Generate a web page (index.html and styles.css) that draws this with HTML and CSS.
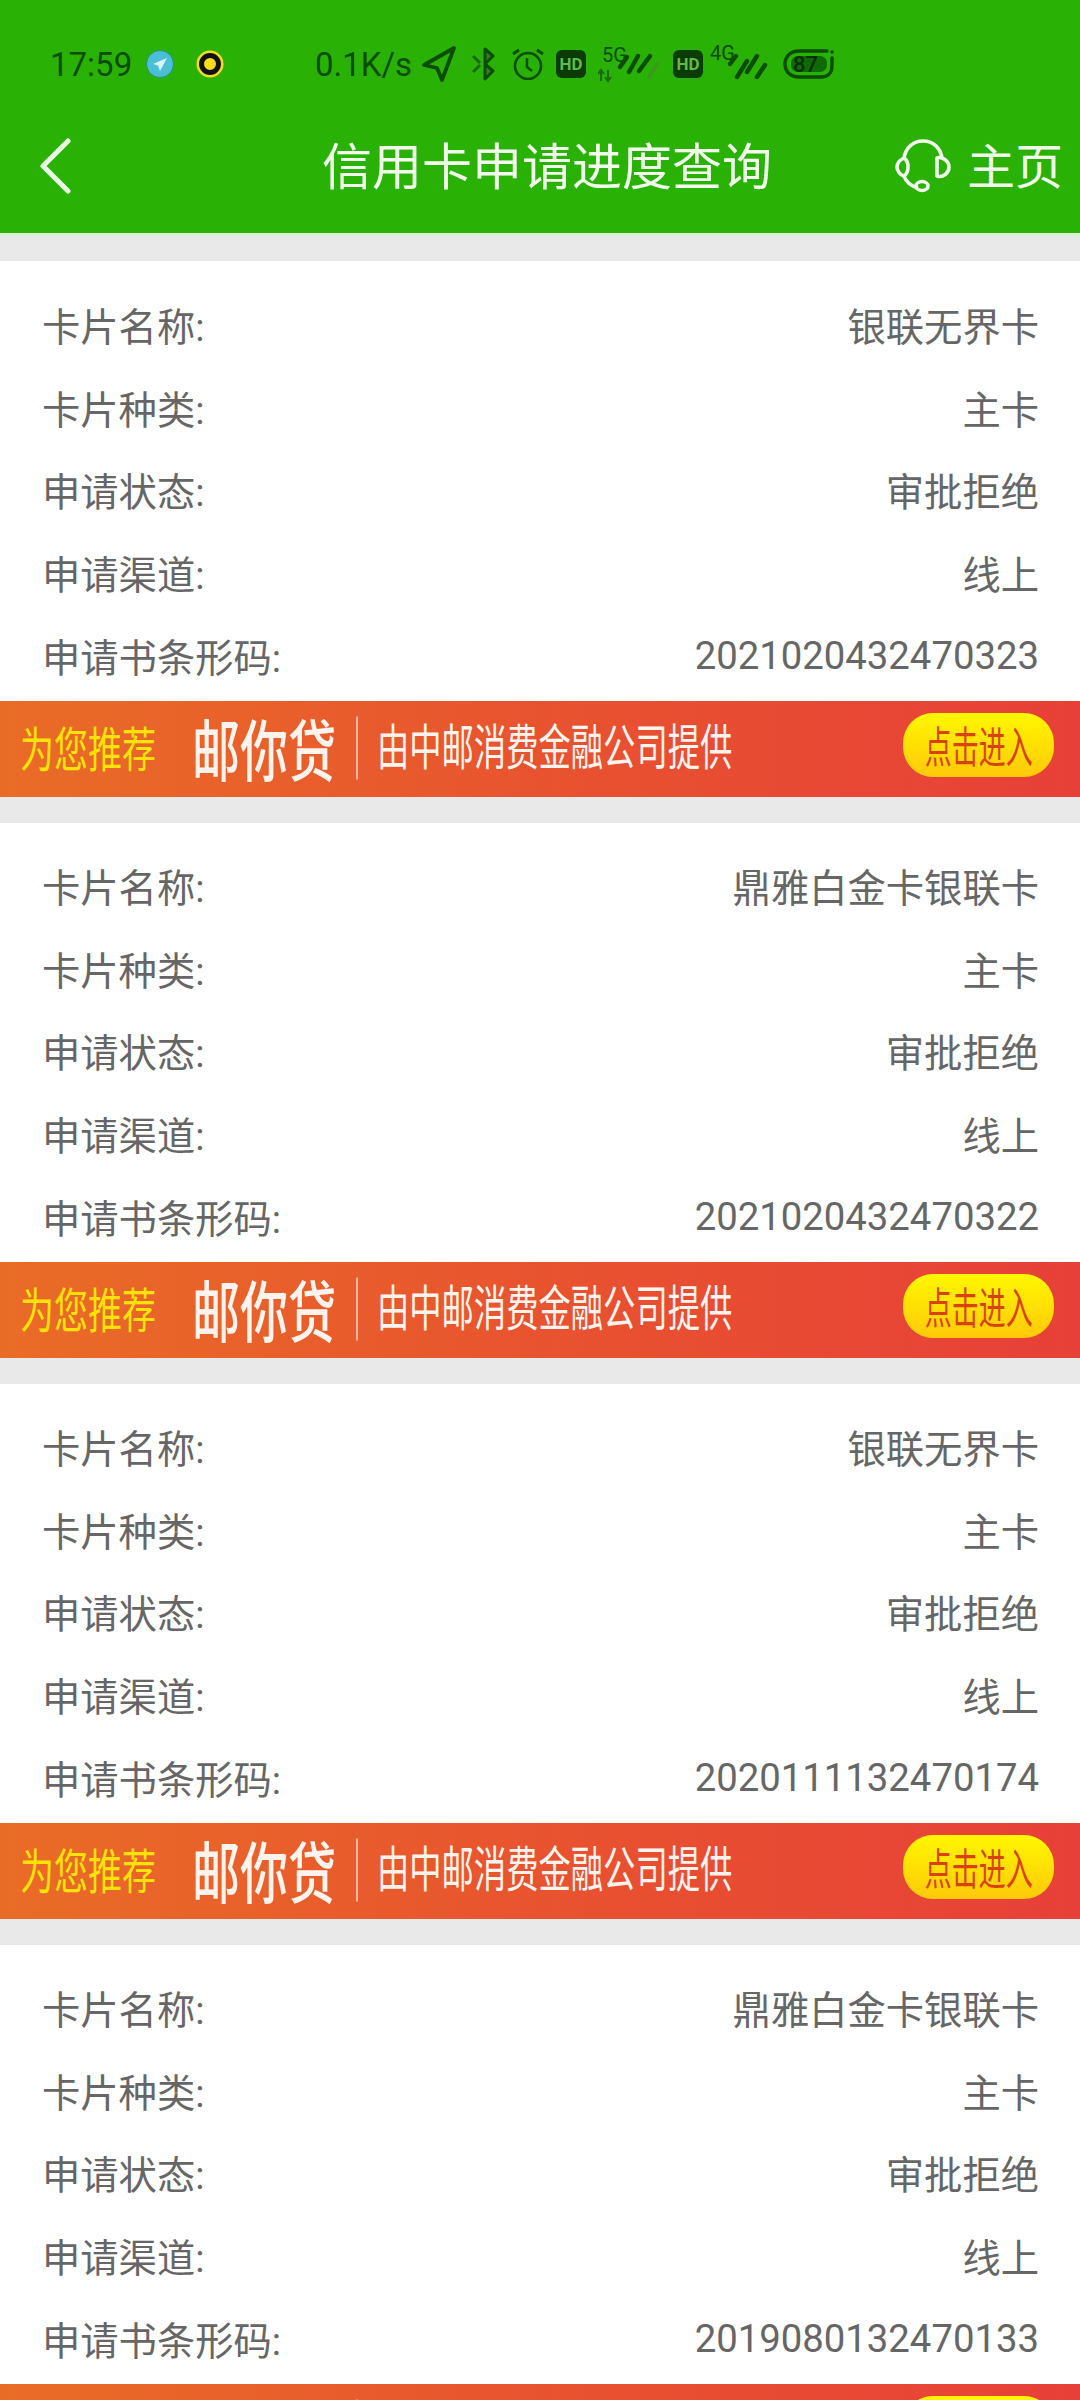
FILE: index.html
```html
<!DOCTYPE html>
<html lang="zh-CN">
<head>
  <meta charset="UTF-8">
  <meta name="viewport" content="width=device-width, initial-scale=1.0">
  <title>信用卡申请进度查询</title>
  <link rel="stylesheet" href="styles.css">
</head>
<body>
  <header class="top">
    <div class="status">
      <span class="time">17:59</span>
      <svg class="ic-tg" viewBox="0 0 28 28"><circle cx="14" cy="14" r="13.5" fill="#4cbfd6" stroke="#1d8a7a" stroke-width=".8"/><path d="M21 8 7 14l5 1.6L14 21z" fill="#d8f4f8"/></svg>
      <svg class="ic-dot" viewBox="0 0 28 28"><circle cx="14" cy="14" r="13.5" fill="#f7dc1e"/><circle cx="14" cy="14" r="8.5" fill="#f7dc1e" stroke="#111" stroke-width="5"/></svg>
      <span class="speed">0.1K/s</span>
      <svg class="ic-nav" viewBox="0 0 34 36"><path d="M32 2 2 19l13 3 5 12z" fill="none" stroke="#0b4d03" stroke-width="3.8" stroke-linejoin="round"/></svg>
      <svg class="ic-bt" viewBox="0 0 24 34"><path d="M13 2v30l8-8-8-7 8-8z" fill="#3a7a2c" stroke="#0b4d03" stroke-width="3" stroke-linejoin="round"/><path d="m1 9 7 7M1 25l7-7" stroke="#1c6a10" stroke-width="3" fill="none"/></svg>
      <svg class="ic-alarm" viewBox="0 0 32 32"><circle cx="16" cy="18" r="13" fill="none" stroke="#0b4d03" stroke-width="2.6"/><path d="M15 10v9l5 4" fill="none" stroke="#0b4d03" stroke-width="2.6"/><path d="m1 6 6-4M31 6l-6-4" stroke="#0b4d03" stroke-width="3"/></svg>
      <span class="hd">HD</span>
      <svg class="ic-sig-a" viewBox="0 0 62 40"><text x="4" y="18" class="sig-text">5G</text><path d="M3 37V27m-3 3 3-4 3 4M10 26v10m-3-3 3 4 3-4" stroke="#1c6a10" stroke-width="2" fill="none"/><path d="m22 23 7-10M31 28l9-16M41 27l11-15" stroke="#0b4d03" stroke-width="4.4" stroke-linecap="round"/><path d="m51 33 8-13" stroke="#3a9a1c" stroke-width="3.4" stroke-linecap="round"/></svg>
      <span class="hd hd-two">HD</span>
      <svg class="ic-sig-b" viewBox="0 0 62 40"><text x="2" y="16" class="sig-text">4G</text><path d="m22 20 6-8M29 33l10-16M39 28l10-16M49 33l8-12" stroke="#0b4d03" stroke-width="4.4" stroke-linecap="round"/></svg>
      <svg class="ic-bat" viewBox="0 0 52 30"><path d="M44 2H16C8 2 2 7 2 15s6 13 14 13h22c7 0 11-4 11-11V9" fill="none" stroke="#0b4d03" stroke-width="3.4" stroke-linecap="round"/><circle cx="49" cy="3" r="1.8" fill="#0b4d03"/><rect x="8" y="7" width="36" height="16" rx="7" fill="#0f6a05"/><text x="10" y="22.5" class="bat-text">87</text></svg>
    </div>
    <nav class="nav">
      <svg class="ic-back" viewBox="0 0 32 56"><path d="M29 3 4 28l25 25" fill="none" stroke="#eafbe4" stroke-width="5" stroke-linecap="round" stroke-linejoin="round"/></svg>
      <h1 class="title">信用卡申请进度查询</h1>
      <div class="home">
        <svg class="ic-headset" viewBox="0 0 56 54"><path d="M9 20C10 9 18 2 28 2s18 7 19 18" fill="none" stroke="#f1fcec" stroke-width="3.6"/><path d="M9 19c-4 2-7 5-7 9s3 8 7 9c3-2 4-5 4-9s-1-7-4-9zM42 19c5-2 12 3 12 9s-6 11-12 9z" fill="none" stroke="#f1fcec" stroke-width="3.6" stroke-linejoin="round"/><path d="M9 37c2 6 7 10 14 12" fill="none" stroke="#f1fcec" stroke-width="3.6"/><ellipse cx="27" cy="47" rx="6" ry="4.5" fill="none" stroke="#f1fcec" stroke-width="3.6"/></svg>
        <span class="home-text">主页</span>
      </div>
    </nav>
  </header>

  <main class="list">
    <section class="card">
      <div class="row"><span>卡片名称:</span><span>银联无界卡</span></div>
      <div class="row"><span>卡片种类:</span><span>主卡</span></div>
      <div class="row"><span>申请状态:</span><span>审批拒绝</span></div>
      <div class="row"><span>申请渠道:</span><span>线上</span></div>
      <div class="row"><span>申请书条形码:</span><span>2021020432470323</span></div>
    </section>
    <div class="banner">
      <span class="b-tag">为您推荐</span>
      <span class="b-name">邮你贷</span>
      <span class="b-sub">由中邮消费金融公司提供</span>
      <span class="b-btn"><span>点击进入</span></span>
    </div>

    <section class="card">
      <div class="row"><span>卡片名称:</span><span>鼎雅白金卡银联卡</span></div>
      <div class="row"><span>卡片种类:</span><span>主卡</span></div>
      <div class="row"><span>申请状态:</span><span>审批拒绝</span></div>
      <div class="row"><span>申请渠道:</span><span>线上</span></div>
      <div class="row"><span>申请书条形码:</span><span>2021020432470322</span></div>
    </section>
    <div class="banner">
      <span class="b-tag">为您推荐</span>
      <span class="b-name">邮你贷</span>
      <span class="b-sub">由中邮消费金融公司提供</span>
      <span class="b-btn"><span>点击进入</span></span>
    </div>

    <section class="card">
      <div class="row"><span>卡片名称:</span><span>银联无界卡</span></div>
      <div class="row"><span>卡片种类:</span><span>主卡</span></div>
      <div class="row"><span>申请状态:</span><span>审批拒绝</span></div>
      <div class="row"><span>申请渠道:</span><span>线上</span></div>
      <div class="row"><span>申请书条形码:</span><span>2020111132470174</span></div>
    </section>
    <div class="banner">
      <span class="b-tag">为您推荐</span>
      <span class="b-name">邮你贷</span>
      <span class="b-sub">由中邮消费金融公司提供</span>
      <span class="b-btn"><span>点击进入</span></span>
    </div>

    <section class="card">
      <div class="row"><span>卡片名称:</span><span>鼎雅白金卡银联卡</span></div>
      <div class="row"><span>卡片种类:</span><span>主卡</span></div>
      <div class="row"><span>申请状态:</span><span>审批拒绝</span></div>
      <div class="row"><span>申请渠道:</span><span>线上</span></div>
      <div class="row"><span>申请书条形码:</span><span>2019080132470133</span></div>
    </section>
    <div class="banner">
      <span class="b-tag">为您推荐</span>
      <span class="b-name">邮你贷</span>
      <span class="b-sub">由中邮消费金融公司提供</span>
      <span class="b-btn"><span>点击进入</span></span>
    </div>
  </main>
</body>
</html>
```

FILE: styles.css
```css
html, body {
  margin: 0;
  padding: 0;
  height: 2400px;
  overflow: hidden;
}
body {
  width: 1080px;
  font-family: Roboto, "Noto Sans CJK SC", sans-serif;
  background-color: #e8e9e8;
}

/* green header */
.top {
  height: 233px;
  padding-top: 40px;
  box-sizing: border-box;
  background: #2ab106;
  box-shadow: 0 3px 2px #d9f0d2;
}
.status {
  display: flex;
  align-items: center;
  height: 48px;
  padding-left: 50px;
  color: #0b4d03;
}
.time {
  width: 83px;
  font-size: 33px;
}
.speed {
  width: 97px;
  margin-left: 91px;
  font-size: 33px;
  white-space: nowrap;
}
.hd {
  width: 30px;
  height: 28px;
  margin-left: 12px;
  border-radius: 6px;
  background: #0a3c03;
  color: #63b84d;
  font-size: 17px;
  font-weight: 700;
  line-height: 28px;
  text-align: center;
}
.hd-two { margin-left: 13px; }
.ic-tg, .ic-dot { width: 28px; height: 28px; }
.ic-tg { margin-left: 13px; }
.ic-dot { margin-left: 22px; }
.ic-nav { width: 34px; height: 36px; margin-left: 10px; }
.ic-bt { width: 24px; height: 34px; margin-left: 16px; }
.ic-alarm { width: 32px; height: 32px; margin-left: 16px; }
.ic-sig-a { width: 62px; height: 40px; margin-left: 12px; }
.ic-sig-b { width: 62px; height: 40px; margin-left: 5px; }
.ic-bat { width: 52px; height: 30px; margin-left: 13px; }
.sig-text { font-size: 20px; fill: #0b4d03; }
.bat-text { font-size: 22px; font-weight: 500; fill: #07300a; }

.nav {
  display: flex;
  align-items: center;
  height: 135px;
  margin-top: 10px;
}
.ic-back {
  width: 32px;
  height: 56px;
  margin-left: 39px;
}
.title {
  margin: 0 0 6px 251px;
  color: #f1fcec;
  font-size: 50px;
  font-weight: 400;
  white-space: nowrap;
}
.home {
  display: flex;
  align-items: center;
  gap: 16px;
  margin-left: 123px;
  color: #f1fcec;
  font-size: 48px;
}
.home-text { margin-bottom: 6px; }
.ic-headset { width: 56px; height: 54px; }

/* list */
.list { padding-top: 28px; }
.card {
  padding: 21px 41px 4px 42px;
  background: #fff;
  color: #666;
  font-size: 38.3px;
}
.card:first-child { padding-top: 22px; }
.row {
  display: flex;
  justify-content: space-between;
  align-items: center;
  height: 82.8px;
}

/* promo strip */
.banner {
  display: flex;
  align-items: center;
  height: 96px;
  margin-bottom: 26px;
  background: linear-gradient(90deg, #e96c26, #e8532f 50%, #e74038);
  color: #fff3ee;
  white-space: nowrap;
}
.b-tag {
  margin: 0 0 5px 20px;
  color: #fde209;
  font-size: 34px;
  transform: scaleY(1.4);
}
.b-name {
  margin: 0 0 3px 36px;
  font-size: 48px;
  font-weight: 500;
  transform: scaleY(1.4);
}
.b-sub {
  margin: 0 0 2px 20px;
  padding-left: 19px;
  font-size: 32.3px;
  border-left: 2px solid #f3b79c;
  line-height: 42px;
  transform: scaleY(1.5);
}
.b-btn {
  display: flex;
  align-items: center;
  justify-content: center;
  width: 151px;
  height: 64px;
  margin: 0 0 8px 171px;
  border-radius: 30px;
  background: linear-gradient(180deg, #fff700, #ffc90a);
  color: #d9420a;
  font-size: 27px;
}
.b-btn span { transform: scaleY(1.6); }
```
